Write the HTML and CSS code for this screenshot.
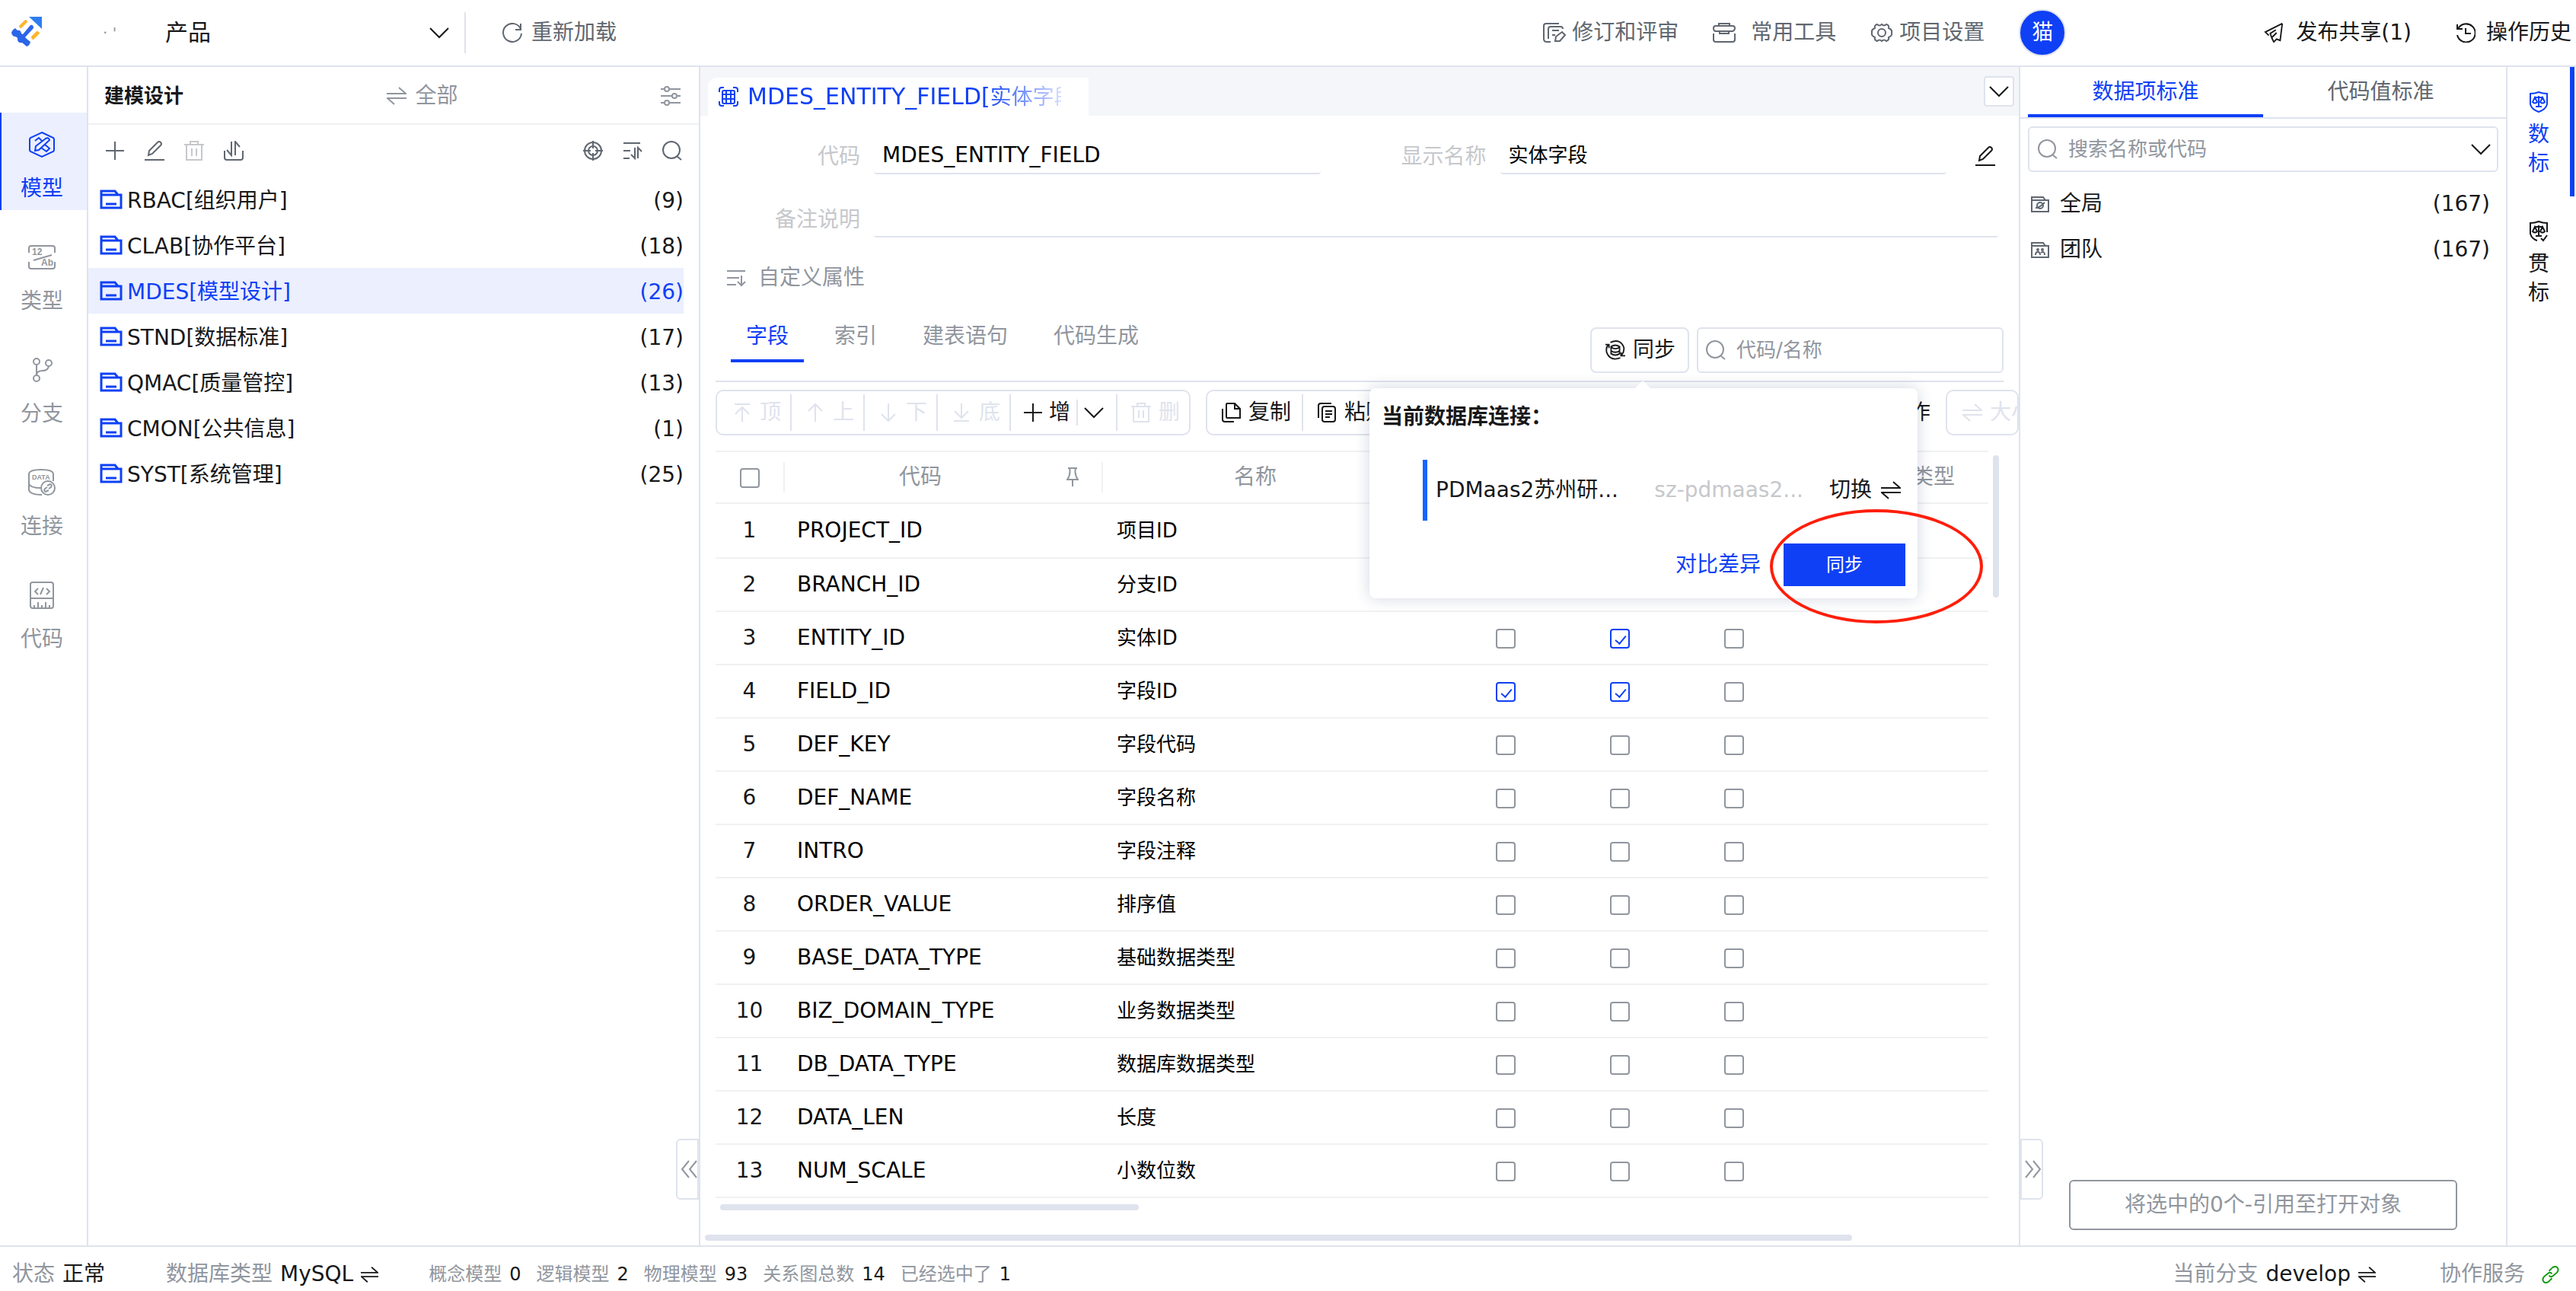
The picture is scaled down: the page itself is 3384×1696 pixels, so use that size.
FILE: index.html
```html
<!DOCTYPE html>
<html lang="zh-CN">
<head>
	<meta charset="UTF-8">
	<title>建模设计</title>
	<link rel="stylesheet" href="styles.css">
</head>
<body>
	<!-- 图标 -->
	<svg class="symbols">
		<symbol id="down" viewBox="0 0 26 26"><path d="M1 7l12 12L25 7"/></symbol>
		<symbol id="reload" viewBox="0 0 26 26"><path d="M24 8A12 12 0 1 0 25 14M24 1v8h-7"/></symbol>
		<symbol id="plus" viewBox="0 0 26 26"><path d="M13 1v24M1 13h24"/></symbol>
		<symbol id="pencil" viewBox="0 0 26 26"><path d="M0 25h26M5 19l1-6L17 2q2-2 4 0t0 4L10 17z"/></symbol>
		<symbol id="trash" viewBox="0 0 26 26"><path d="M0 5h26M8 5V1h10v4M3 5v20h20V5M10 10v10M16 10v10"/></symbol>
		<symbol id="import" viewBox="0 0 26 26"><path d="M1 13v9q0 3 3 3h18q3 0 3-3v-9M10 1v18l-6-7M15 19V1l6 7"/></symbol>
		<symbol id="target" viewBox="0 0 26 26"><circle cx="13" cy="13" r="11"/><circle cx="13" cy="13" r="6"/><path d="M13 0v10M13 16v10M0 13h10M16 13h10"/></symbol>
		<symbol id="sort" viewBox="0 0 26 26"><path d="M1 3h22M1 13h9M1 23h8M16 9v14l-5-5M20 23V9l5 5"/></symbol>
		<symbol id="unfold" viewBox="0 0 26 26"><path d="M1 4h24M1 13h16M1 22h12M20 10v13M15 18l5 5 5-5"/></symbol>
		<symbol id="search" viewBox="0 0 26 26"><circle cx="12" cy="12" r="11"/><path d="M19 20l6 5"/></symbol>
		<symbol id="sliders" viewBox="0 0 26 26"><path d="M0 4h5M11 4h15M0 13h15M21 13h5M0 22h5M11 22h15"/><circle cx="8" cy="4" r="3"/><circle cx="18" cy="13" r="3"/><circle cx="8" cy="22" r="3"/></symbol>
		<symbol id="swap" viewBox="0 0 26 26"><path d="M0 10h25L16 2M26 16H1l9 8"/></symbol>
		<symbol id="folder" viewBox="0 0 30 26"><path d="M2 24V2h18l4 5h4v17zM2 7h24M8 19h14"/></symbol>
		<symbol id="folder-all" viewBox="0 0 24 21"><path d="M1 20V1h15l3 4h4v15zM1 5h18"/><circle cx="12" cy="12" r="4"/><path d="M6 15q4 1 12-7"/></symbol>
		<symbol id="folder-team" viewBox="0 0 24 21"><path d="M1 20V1h15l3 4h4v15zM1 5h18M6 17q0-4 3-4t3 4M13 14q5-3 5 3"/><circle cx="9" cy="10" r="1"/><circle cx="15" cy="10" r="1"/></symbol>
		<symbol id="review" viewBox="0 0 30 26"><path d="M10 25H5q-4 0-4-4V4q0-3 3-3h17M7 21V8q0-3 3-3h13q3 0 3 3M12 10h9M12 16h4"/><path d="M16 24l1-6 8-6 4 4-7 8z"/></symbol>
		<symbol id="toolbox" viewBox="0 0 30 26"><path d="M8 4V1h14v3M1 7q0-3 3-3h22q3 0 3 3t-3 4H4Q1 11 1 7M1 14v8q0 3 3 3h22q3 0 3-3v-8M9 11v3h12v-3"/></symbol>
		<symbol id="gear" viewBox="0 0 28 26"><path d="M8 2q3 3 6 0 3 3 6 0 4 1 3 5 5 2 4 6 1 4-4 6 1 4-3 5-3-3-6 0-3-3-6 0-4-1-3-5-5-2-4-6-1-4 4-6-1-4 3-5z"/><circle cx="14" cy="13" r="5"/></symbol>
		<symbol id="plane" viewBox="0 0 28 28"><path d="M26 1L2 13l5 5M26 1l-3 24-5-2-4 4-3-6M11 21l-2-6 8-5M11 21l7-7"/></symbol>
		<symbol id="history" viewBox="0 0 26 26"><path d="M3 8A12 12 0 1 1 2 16M2 2v6h7M13 7v7h7"/></symbol>
		<symbol id="model" viewBox="0 0 36 36"><path d="M18 2l15 7q1 1 1 2v14q0 1-1 2l-15 7-15-7q-1-1-1-2V11q0-1 1-2z"/><path d="M9 13l5-4 5 5M22 18l6 5-4 4-7-5M23 10q4-2 5 2L14 25l-5 1 1-6z"/></symbol>
		<symbol id="type" viewBox="0 0 36 36"><path d="M1 12V6q0-3 3-3h28q3 0 3 3v6M1 24v6q0 3 3 3h28q3 0 3-3v-6M7 22l24-7"/><text x="5" y="15">12</text><text x="17" y="29">Ab</text></symbol>
		<symbol id="branch" viewBox="0 0 36 36"><circle cx="11" cy="7" r="4"/><circle cx="27" cy="9" r="4"/><circle cx="11" cy="29" r="4"/><path d="M11 11v14M27 13q-1 6-8 6-8 0-8 6"/></symbol>
		<symbol id="link-db" viewBox="0 0 36 36"><path d="M1 7q0-6 16-6t16 6v9M1 7v21q2 6 17 6M1 20q3 5 15 5"/><text class="small" x="5" y="14">DATA</text><circle cx="26" cy="25" r="9"/><path d="M25 22l4-2q3 1 1 4l-3 2M27 28l-4 2q-3-1-1-4l3-2"/></symbol>
		<symbol id="code" viewBox="0 0 36 36"><rect x="3" y="1" width="30" height="34" rx="3"/><path d="M3 22h30M13 9l-4 4 4 4M24 9l4 4-4 4M20 8l-4 9M8 31v4M13 27v8M18 31v4M23 27v8M28 31v4"/></symbol>
		<symbol id="table" viewBox="0 0 26 26"><path d="M1 7V4q0-3 3-3h3M19 1h3q3 0 3 3v3M1 19v3q0 3 3 3h3M19 25h3q3 0 3-3v-3"/><rect x="5" y="5" width="16" height="17" rx="2"/><path d="M5 10h16M5 16h16M10 5v17M16 5v17"/></symbol>
		<symbol id="db-sync" viewBox="0 0 30 28"><path d="M8 3q14-6 19 7 1 6-3 11M22 25Q8 30 3 18 1 11 5 6M1 6h5v5M29 22h-6v-5"/><path d="M9 9q6-4 12 0v10q-6 4-12 0zM9 10q6 4 12 0M9 15q6 4 12 0"/></symbol>
		<symbol id="top" viewBox="0 0 26 26"><path d="M3 2h20M13 25V7M4 15l9-9 9 9"/></symbol>
		<symbol id="up" viewBox="0 0 26 26"><path d="M13 25V2M4 11l9-9 9 9"/></symbol>
		<symbol id="dn" viewBox="0 0 26 26"><path d="M13 1v23M4 15l9 9 9-9"/></symbol>
		<symbol id="bottom" viewBox="0 0 26 26"><path d="M3 24h20M13 1v18M4 11l9 9 9-9"/></symbol>
		<symbol id="copy" viewBox="0 0 26 26"><path d="M8 1h10l7 7v12H8q-1 0-1-2V3q0-2 1-2M18 1v7h7M2 8v14q0 3 3 3h12"/></symbol>
		<symbol id="paste" viewBox="0 0 26 26"><path d="M2 20V4q0-3 3-3h14"/><rect x="7" y="5" width="17" height="20" rx="3"/><path d="M11 11h9M11 15h9M11 19h6"/></symbol>
		<symbol id="pin" viewBox="0 0 16 26"><path d="M2 1h12M4 1q2 8-3 15h14Q10 9 12 1M8 16v9"/></symbol>
		<symbol id="left2" viewBox="0 0 22 24"><path d="M11 1L2 12l9 11M21 1l-9 11 9 11"/></symbol>
		<symbol id="right2" viewBox="0 0 22 24"><path d="M1 1l9 11-9 11M11 1l9 11-9 11"/></symbol>
		<symbol id="scale" viewBox="0 0 26 28"><path d="M13 1q5 2 11 2v14q-2 7-11 10Q4 24 2 17V3q6 0 11-2zM7 8h12M13 6v14M9 20h8M8 8l-3 6q3 3 6 0zM18 8l-3 6q3 3 6 0z"/></symbol>
		<symbol id="scale-check" viewBox="0 0 26 28"><path d="M24 15V3q-6 0-11-2-5 2-11 2v14q2 7 9 9M16 23l3 3 5-7M7 8h12M13 6v14M9 20h8M8 8l-3 6q3 3 6 0zM18 8l-3 6q3 3 6 0z"/></symbol>
		<symbol id="chain" viewBox="0 0 24 24"><path d="M10 7l5-5q4-2 6 0 3 3 0 7l-6 5q-3 2-5-1M14 17l-5 5q-4 2-6 0-3-3 0-7l6-5q3-2 5 1"/></symbol>
	</svg>

	<header class="header">
		<svg class="logo" viewBox="0 0 42 42">
			<path class="logo-corner" d="M25 0h17v16z"/>
			<path class="logo-orange" d="M12 12l8-8q3 0 3 3l-8 8q-3 0-3-3zM28 26l7-7q4 0 4 3l-8 8q-3 0-3-4z"/>
			<path class="logo-blue" d="M27 11q4-1 4 4L20 27l2 2 5 4q-1 5-5 6l-6-5q-4 1-6-3 1-4-3-5-4 0-5-5 1-4 5-6l3 3q4-1 5 4l2 1z"/>
		</svg>
		<button class="product"><span class="product-dots">· '</span><span class="product-name">产品</span><svg class="icon"><use href="#down"/></svg></button>
		<button class="head-btn reload"><svg class="icon"><use href="#reload"/></svg>重新加载</button>
		<nav class="head-nav">
			<button class="head-btn"><svg class="icon wide"><use href="#review"/></svg>修订和评审</button>
			<button class="head-btn tools-btn"><svg class="icon wide"><use href="#toolbox"/></svg>常用工具</button>
			<button class="head-btn"><svg class="icon wide"><use href="#gear"/></svg>项目设置</button>
			<span class="avatar">猫</span>
		</nav>
		<nav class="head-right">
			<button class="head-btn"><svg class="icon wide"><use href="#plane"/></svg>发布共享(1)</button>
			<button class="head-btn"><svg class="icon"><use href="#history"/></svg>操作历史</button>
		</nav>
	</header>

	<main class="main">
		<nav class="rail">
			<button class="rail-item active"><svg><use href="#model"/></svg>模型</button>
			<button class="rail-item"><svg><use href="#type"/></svg>类型</button>
			<button class="rail-item"><svg><use href="#branch"/></svg>分支</button>
			<button class="rail-item"><svg><use href="#link-db"/></svg>连接</button>
			<button class="rail-item"><svg><use href="#code"/></svg>代码</button>
		</nav>

		<aside class="side">
			<div class="side-head">
				<h2>建模设计</h2>
				<button class="all"><svg class="icon"><use href="#swap"/></svg>全部</button>
				<button class="filter" aria-label="筛选"><svg class="icon"><use href="#sliders"/></svg></button>
			</div>
			<div class="side-tools">
				<button aria-label="新增"><svg class="icon"><use href="#plus"/></svg></button>
				<button aria-label="编辑"><svg class="icon"><use href="#pencil"/></svg></button>
				<button aria-label="删除" disabled><svg class="icon"><use href="#trash"/></svg></button>
				<button aria-label="导入"><svg class="icon"><use href="#import"/></svg></button>
				<button class="push" aria-label="定位"><svg class="icon"><use href="#target"/></svg></button>
				<button aria-label="排序"><svg class="icon"><use href="#sort"/></svg></button>
				<button aria-label="搜索"><svg class="icon"><use href="#search"/></svg></button>
			</div>
			<ul class="tree">
				<li><svg><use href="#folder"/></svg><span>RBAC[组织用户]</span><em>(9)</em></li>
				<li><svg><use href="#folder"/></svg><span>CLAB[协作平台]</span><em>(18)</em></li>
				<li class="active"><svg><use href="#folder"/></svg><span>MDES[模型设计]</span><em>(26)</em></li>
				<li><svg><use href="#folder"/></svg><span>STND[数据标准]</span><em>(17)</em></li>
				<li><svg><use href="#folder"/></svg><span>QMAC[质量管控]</span><em>(13)</em></li>
				<li><svg><use href="#folder"/></svg><span>CMON[公共信息]</span><em>(1)</em></li>
				<li><svg><use href="#folder"/></svg><span>SYST[系统管理]</span><em>(25)</em></li>
			</ul>
			<button class="fold fold-left" aria-label="收起左侧"><svg><use href="#left2"/></svg></button>
		</aside>

		<section class="center">
			<div class="file-tabs">
				<button class="file-tab"><svg class="icon"><use href="#table"/></svg><span class="file-name"><span class="file-code">MDES_ENTITY_FIELD[</span>实体字段]</span></button>
				<button class="more" aria-label="更多"><svg class="icon"><use href="#down"/></svg></button>
			</div>

			<form class="form">
				<div class="form-row">
					<label for="code-input">代码</label>
					<input id="code-input" value="MDES_ENTITY_FIELD">
					<label for="name-input" class="name-label">显示名称</label>
					<input id="name-input" class="name" value="实体字段">
					<button type="button" aria-label="编辑"><svg class="icon"><use href="#pencil"/></svg></button>
				</div>
				<div class="form-row">
					<label for="intro-input">备注说明</label>
					<input id="intro-input">
				</div>
				<button type="button" class="custom"><svg class="icon"><use href="#unfold"/></svg>自定义属性</button>
			</form>

			<div class="tabbar">
				<button class="tab active">字段</button>
				<button class="tab">索引</button>
				<button class="tab">建表语句</button>
				<button class="tab">代码生成</button>
				<div class="tab-tools">
					<div class="sync">
						<button class="sync-btn"><svg class="icon wide"><use href="#db-sync"/></svg>同步</button>
						<div class="popover">
							<h3>当前数据库连接：</h3>
							<div class="conn">
								<span class="conn-name">PDMaas2苏州研...</span>
								<span class="conn-host">sz-pdmaas2...</span>
								<button>切换<svg class="icon"><use href="#swap"/></svg></button>
							</div>
							<div class="pop-foot">
								<a href="#">对比差异</a>
								<button class="primary">同步</button>
							</div>
							<div class="mark"></div>
						</div>
					</div>
					<label class="search-box"><svg class="icon"><use href="#search"/></svg><input placeholder="代码/名称" aria-label="代码/名称"></label>
				</div>
			</div>

			<div class="toolbar">
				<div class="group">
					<button disabled><svg class="icon"><use href="#top"/></svg>顶</button>
					<button disabled><svg class="icon"><use href="#up"/></svg>上</button>
					<button disabled><svg class="icon"><use href="#dn"/></svg>下</button>
					<button disabled><svg class="icon"><use href="#bottom"/></svg>底</button>
					<button class="add"><svg class="icon"><use href="#plus"/></svg>增<i></i><svg class="icon"><use href="#down"/></svg></button>
					<button disabled><svg class="icon"><use href="#trash"/></svg>删</button>
				</div>
				<div class="group second">
					<button><svg class="icon"><use href="#copy"/></svg>复制</button>
					<button><svg class="icon"><use href="#paste"/></svg>粘贴</button>
				</div>
				<button class="actions">操作</button>
				<div class="cut">
					<div class="group">
						<button disabled><svg class="icon"><use href="#swap"/></svg>大小写</button>
					</div>
				</div>
			</div>

			<div class="grid">
				<table class="fields">
					<colgroup><col class="c-no"><col class="c-code"><col class="c-name"><col class="c-box"><col class="c-box"><col class="c-box"><col></colgroup>
					<thead>
						<tr><th><input type="checkbox" aria-label="全选"></th><th class="pinned"><div>代码<svg><use href="#pin"/></svg></div></th><th class="th-name">名称</th><th aria-label="主键"></th><th aria-label="不为空"></th><th aria-label="自增"></th><th class="th-type">类型</th></tr>
					</thead>
					<tbody>
						<tr><td>1</td><td>PROJECT_ID</td><td>项目ID</td><td><input type="checkbox" aria-label="主键"></td><td><input type="checkbox" aria-label="不为空"></td><td><input type="checkbox" aria-label="自增"></td><td></td></tr>
						<tr><td>2</td><td>BRANCH_ID</td><td>分支ID</td><td><input type="checkbox" aria-label="主键"></td><td><input type="checkbox" aria-label="不为空"></td><td><input type="checkbox" aria-label="自增"></td><td></td></tr>
						<tr><td>3</td><td>ENTITY_ID</td><td>实体ID</td><td><input type="checkbox" aria-label="主键"></td><td><input type="checkbox" aria-label="不为空" checked></td><td><input type="checkbox" aria-label="自增"></td><td></td></tr>
						<tr><td>4</td><td>FIELD_ID</td><td>字段ID</td><td><input type="checkbox" aria-label="主键" checked></td><td><input type="checkbox" aria-label="不为空" checked></td><td><input type="checkbox" aria-label="自增"></td><td></td></tr>
						<tr><td>5</td><td>DEF_KEY</td><td>字段代码</td><td><input type="checkbox" aria-label="主键"></td><td><input type="checkbox" aria-label="不为空"></td><td><input type="checkbox" aria-label="自增"></td><td></td></tr>
						<tr><td>6</td><td>DEF_NAME</td><td>字段名称</td><td><input type="checkbox" aria-label="主键"></td><td><input type="checkbox" aria-label="不为空"></td><td><input type="checkbox" aria-label="自增"></td><td></td></tr>
						<tr><td>7</td><td>INTRO</td><td>字段注释</td><td><input type="checkbox" aria-label="主键"></td><td><input type="checkbox" aria-label="不为空"></td><td><input type="checkbox" aria-label="自增"></td><td></td></tr>
						<tr><td>8</td><td>ORDER_VALUE</td><td>排序值</td><td><input type="checkbox" aria-label="主键"></td><td><input type="checkbox" aria-label="不为空"></td><td><input type="checkbox" aria-label="自增"></td><td></td></tr>
						<tr><td>9</td><td>BASE_DATA_TYPE</td><td>基础数据类型</td><td><input type="checkbox" aria-label="主键"></td><td><input type="checkbox" aria-label="不为空"></td><td><input type="checkbox" aria-label="自增"></td><td></td></tr>
						<tr><td>10</td><td>BIZ_DOMAIN_TYPE</td><td>业务数据类型</td><td><input type="checkbox" aria-label="主键"></td><td><input type="checkbox" aria-label="不为空"></td><td><input type="checkbox" aria-label="自增"></td><td></td></tr>
						<tr><td>11</td><td>DB_DATA_TYPE</td><td>数据库数据类型</td><td><input type="checkbox" aria-label="主键"></td><td><input type="checkbox" aria-label="不为空"></td><td><input type="checkbox" aria-label="自增"></td><td></td></tr>
						<tr><td>12</td><td>DATA_LEN</td><td>长度</td><td><input type="checkbox" aria-label="主键"></td><td><input type="checkbox" aria-label="不为空"></td><td><input type="checkbox" aria-label="自增"></td><td></td></tr>
						<tr><td>13</td><td>NUM_SCALE</td><td>小数位数</td><td><input type="checkbox" aria-label="主键"></td><td><input type="checkbox" aria-label="不为空"></td><td><input type="checkbox" aria-label="自增"></td><td></td></tr>
					</tbody>
				</table>
				<div class="bar-v"></div>
			</div>
			<div class="bar-h"></div>
			<div class="bar-h outer"></div>
		</section>

		<aside class="standard">
			<div class="std-tabs">
				<button class="active">数据项标准</button>
				<button>代码值标准</button>
			</div>
			<label class="search-box"><svg class="icon"><use href="#search"/></svg><input placeholder="搜索名称或代码" aria-label="搜索名称或代码"><svg class="icon arrow"><use href="#down"/></svg></label>
			<ul class="std-list">
				<li><svg><use href="#folder-all"/></svg><span>全局</span><em>(167)</em></li>
				<li><svg><use href="#folder-team"/></svg><span>团队</span><em>(167)</em></li>
			</ul>
			<button class="quote">将选中的0个-引用至打开对象</button>
			<button class="fold fold-right" aria-label="收起右侧"><svg><use href="#right2"/></svg></button>
		</aside>

		<nav class="rail-right">
			<button class="active"><svg><use href="#scale"/></svg><span>数标</span></button>
			<button><svg><use href="#scale-check"/></svg><span>贯标</span></button>
		</nav>
	</main>

	<footer class="footer">
		<span class="stat">状态 <b>正常</b></span>
		<span class="stat db">数据库类型 <b>MySQL</b><svg class="icon"><use href="#swap"/></svg></span>
		<div class="counts">
			<span>概念模型<b>0</b></span>
			<span>逻辑模型<b>2</b></span>
			<span>物理模型<b>93</b></span>
			<span>关系图总数<b>14</b></span>
			<span>已经选中了<b>1</b></span>
		</div>
		<span class="stat branch">当前分支 <b>develop</b><svg class="icon"><use href="#swap"/></svg></span>
		<span class="stat service">协作服务<svg class="icon"><use href="#chain"/></svg></span>
	</footer>
</body>
</html>
```
FILE: styles.css
```css
* {
	padding: 0;
	margin: 0;
	box-sizing: border-box;
}
body {
	display: flex;
	flex-direction: column;
	height: 100vh;
	overflow: hidden;
	font-family: "DejaVu Sans", "Noto Sans CJK SC", sans-serif;
	font-size: 28px;
	line-height: 40px;
	color: #17181a;
	background-color: #fff;
}
button, input {
	font: inherit;
	color: inherit;
	border: none;
	background: none;
	outline: none;
}
button {
	display: flex;
	align-items: center;
	white-space: nowrap;
	cursor: pointer;
}
input {
	min-width: 0;
}
input::placeholder {
	color: #91969e;
	opacity: 1;
}
ul {
	list-style: none;
}
em {
	font-style: normal;
}
b {
	font-weight: normal;
	color: #17181a;
}
a {
	color: #0f40f5;
	text-decoration: none;
}
svg {
	flex: none;
	fill: none;
	stroke: currentColor;
	stroke-width: 2;
}
svg text {
	font: bold 12px "Liberation Sans", sans-serif;
	fill: currentColor;
	stroke: none;
}
svg .small {
	font-size: 9px;
}
.symbols {
	display: none;
}
.icon {
	width: 26px;
	height: 26px;
}
.icon.wide {
	width: 30px;
}

/* header */
.header {
	display: flex;
	align-items: center;
	height: 88px;
	padding: 0 6px 0 13px;
	border-bottom: 2px solid #dfe3ed;
}
.logo {
	width: 42px;
	height: 42px;
	stroke: none;
}
.logo-corner {
	fill: #2e7df0;
}
.logo-orange {
	fill: #fbb62c;
}
.logo-blue {
	fill: #2c66e8;
}
.product {
	width: 557px;
	height: 54px;
	padding: 0 20px 0 80px;
	font-size: 30px;
	border-right: 2px solid #dfe3ed;
}
.product-dots {
	width: 82px;
	font-size: 20px;
	text-align: left;
	color: #91969e;
}
.product .icon {
	margin-left: auto;
}
.head-btn {
	gap: 12px;
	color: #606770;
}
.reload {
	margin-left: 48px;
}
.head-nav {
	display: flex;
	align-items: center;
	gap: 45px;
	margin-left: auto;
	margin-right: 258px;
}
.head-nav .head-btn {
	gap: 8px;
}
.head-nav .tools-btn {
	gap: 20px;
}
.avatar {
	width: 62px;
	height: 62px;
	line-height: 58px;
	text-align: center;
	color: #fff;
	border: 2px solid #dfe3ed;
	border-radius: 50%;
	background-color: #0f40f5;
}
.head-right {
	display: flex;
	gap: 58px;
}
.head-right .head-btn {
	gap: 14px;
	color: #17181a;
}

.main {
	display: flex;
	flex: 1;
	min-height: 0;
}

/* left rail */
.rail {
	display: flex;
	flex: none;
	flex-direction: column;
	gap: 20px;
	width: 116px;
	padding-top: 60px;
	border-right: 2px solid #dfe3ed;
}
.rail-item {
	flex-direction: column;
	gap: 20px;
	height: 128px;
	padding-top: 24px;
	padding-right: 6px;
	color: #91969e;
	border-left: 2px solid transparent;
}
.rail-item svg {
	width: 36px;
	height: 36px;
}
.rail-item.active {
	color: #0f40f5;
	border-color: #0f40f5;
	background-color: #ebeffe;
}

/* model tree */
.side {
	position: relative;
	flex: none;
	width: 804px;
	border-right: 2px solid #dfe3ed;
}
.side-head {
	display: flex;
	align-items: center;
	justify-content: space-between;
	height: 76px;
	padding: 2px 24px 0 21px;
	color: #91969e;
	border-bottom: 2px solid #f0f1f3;
}
.side-head h2 {
	font-size: 26px;
	color: #17181a;
}
.all {
	gap: 12px;
}
.side-tools {
	display: flex;
	align-items: center;
	gap: 26px;
	height: 68px;
	padding: 0 22px;
	color: #606770;
}
.side-tools button:disabled {
	color: #c6c8cc;
}
.push {
	margin-left: auto;
}
.tree {
	padding-right: 20px;
}
.tree li {
	display: flex;
	align-items: center;
	gap: 6px;
	height: 60px;
	padding-left: 15px;
}
.tree svg {
	width: 30px;
	height: 26px;
	color: #0f40f5;
	stroke-width: 3;
}
.tree span, .tree em {
	padding-top: 4px;
}
.tree em {
	margin-left: auto;
}
.tree .active {
	color: #0f40f5;
	background-color: #ebeffe;
}
.fold {
	position: absolute;
	bottom: 60px;
	justify-content: center;
	width: 30px;
	height: 80px;
	padding-left: 4px;
	color: #91969e;
	border: 2px solid #dfe3ed;
	background-color: #fff;
}
.fold svg {
	width: 22px;
	height: 24px;
}
.fold-left {
	right: 0;
	border-radius: 6px 0 0 6px;
}
.fold-right {
	left: 0;
	border-radius: 0 6px 6px 0;
}

/* editor */
.center {
	display: flex;
	flex: 1;
	flex-direction: column;
	min-width: 0;
	padding-bottom: 6px;
}
.file-tabs {
	display: flex;
	justify-content: space-between;
	padding: 12px 6px 0 10px;
	background-color: #f5f6f9;
}
.file-tab {
	gap: 12px;
	width: 500px;
	height: 50px;
	margin-top: 2px;
	padding: 0 36px 0 14px;
	color: #0f40f5;
	border-radius: 12px 0 0 0;
	background-color: #fff;
}
.file-name {
	flex: 1;
	overflow: hidden;
	text-align: left;
	-webkit-mask-image: linear-gradient(to right, #000 75%, transparent 105%);
	mask-image: linear-gradient(to right, #000 75%, transparent 105%);
}
.file-code {
	font-size: 30px;
}
.more {
	justify-content: center;
	width: 40px;
	height: 40px;
	border: 2px solid #dfe3ed;
	border-radius: 4px;
	background-color: #fff;
}
.form {
	padding-top: 29px;
}
.form-row {
	display: flex;
	gap: 18px;
	height: 48px;
	margin-bottom: 35px;
	padding-right: 27px;
	line-height: 50px;
}
.form-row label {
	width: 210px;
	text-align: right;
	color: #c6c8cc;
}
.form-row .name-label {
	width: 200px;
}
.form-row input {
	flex: 1;
	padding: 0 11px;
	color: #000;
	border-bottom: 2px solid #dfe3ed;
	border-radius: 4px;
}
.form-row input.name {
	font-size: 26px;
}
.form-row button {
	padding: 0 4px 0 20px;
}
.custom {
	gap: 16px;
	margin-left: 34px;
	line-height: 36px;
	color: #91969e;
}
.tabbar {
	display: flex;
	gap: 20px;
	height: 82px;
	margin: 37px 20px 0;
	padding-left: 20px;
	border-bottom: 2px solid #dfe3ed;
}
.tab {
	height: 56px;
	padding: 0 20px 8px;
	color: #91969e;
	border-bottom: 4px solid transparent;
}
.tab.active {
	color: #0f40f5;
	border-color: #0f40f5;
}
.tab-tools {
	display: flex;
	gap: 10px;
	height: 60px;
	margin: 10px 0 0 auto;
}
.sync {
	position: relative;
}
.sync-btn {
	gap: 8px;
	height: 60px;
	padding: 0 16px;
	border: 2px solid #dfe3ed;
	border-radius: 8px;
}
.search-box {
	display: flex;
	align-items: center;
	gap: 14px;
	width: 403px;
	height: 60px;
	padding: 0 10px;
	font-size: 26px;
	color: #91969e;
	border: 2px solid #dfe3ed;
	border-radius: 6px;
}
.search-box input {
	flex: 1;
}
.toolbar {
	display: flex;
	gap: 20px;
	margin: 10px 0 20px 20px;
}
.group {
	display: flex;
	flex: none;
	align-items: center;
	height: 60px;
	border: 2px solid #dfe3ed;
	border-radius: 10px;
}
.group button {
	gap: 10px;
	height: 48px;
	padding: 0 12px 0 18px;
	border-left: 2px solid #dfe3ed;
}
.group button:first-child {
	padding-left: 20px;
	border-left: none;
}
.group button:disabled {
	color: #dfe3ed;
}
.group .add {
	gap: 8px;
	padding: 0 16px;
}
.add i {
	width: 2px;
	height: 34px;
	background-color: #dfe3ed;
}
.group.second button {
	padding: 0 14px 0 18px;
}
.actions {
	flex: 1;
	justify-content: flex-end;
}
.cut {
	width: 96px;
	overflow: hidden;
}

/* field table */
.grid {
	display: flex;
	gap: 6px;
	margin: 0 26px 0 20px;
}
.fields {
	flex: 1;
	table-layout: fixed;
	border-spacing: 0;
}
.c-no {
	width: 89px;
}
.c-code {
	width: 420px;
}
.c-name {
	width: 454px;
}
.c-box {
	width: 150px;
}
.fields th {
	height: 70px;
	font-weight: normal;
	color: #91969e;
	border-top: 2px solid #f0f1f3;
	border-bottom: 2px solid #f0f1f3;
}
.fields .th-name {
	padding-right: 54px;
}
.fields .th-type {
	padding-right: 44px;
	text-align: right;
}
.pinned div {
	display: flex;
	align-items: center;
	justify-content: center;
	padding-left: 150px;
	border-left: 2px solid #f0f1f3;
	border-right: 2px solid #f0f1f3;
}
.pinned svg {
	width: 16px;
	height: 26px;
	margin: 0 30px 0 164px;
}
.fields td {
	height: 70px;
	padding-left: 18px;
	color: #000;
	border-bottom: 2px solid #f0f1f3;
}
.fields tr:first-child td {
	height: 72px;
}
.fields td:first-child {
	padding-left: 0;
	text-align: center;
	color: #17181a;
}
.fields td:nth-child(3) {
	font-size: 26px;
}
.fields td:nth-child(n+4) {
	padding-left: 0;
	text-align: center;
}
.fields input {
	position: relative;
	width: 26px;
	height: 26px;
	vertical-align: middle;
	border: 2px solid #91969e;
	border-radius: 4px;
	background-color: #fff;
	appearance: none;
}
.fields input:checked {
	border-color: #0f40f5;
}
.fields input:checked::after {
	content: "";
	position: absolute;
	top: 4px;
	left: 8px;
	width: 6px;
	height: 12px;
	border: solid #0f40f5;
	border-width: 0 2px 2px 0;
	transform: rotate(40deg);
}
.bar-v {
	width: 8px;
	height: 187px;
	margin-top: 6px;
	border-radius: 4px;
	background-color: #dfe3ed;
}
.bar-h {
	width: 550px;
	height: 8px;
	margin: 8px 0 0 26px;
	border-radius: 4px;
	background-color: #dfe3ed;
}
.bar-h.outer {
	width: 87%;
	margin: auto 0 0 6px;
}

/* sync popover */
.popover {
	position: absolute;
	z-index: 2;
	top: 80px;
	right: -300px;
	width: 720px;
	height: 276px;
	padding: 18px 16px;
	border-radius: 8px;
	background-color: #fff;
	box-shadow: 0 0 20px rgba(30, 50, 100, .2);
}
.popover::before {
	content: "";
	position: absolute;
	top: -10px;
	left: 349px;
	border: 10px solid transparent;
	border-top: none;
	border-bottom-color: #fff;
}
.popover h3 {
	font-size: 28px;
}
.conn {
	display: flex;
	align-items: center;
	height: 80px;
	margin: 36px 6px 30px 54px;
	padding-left: 11px;
	border-left: 6px solid #1664ff;
}
.conn-name {
	flex: 1;
}
.conn-host {
	margin-right: 34px;
	color: #c6c8cc;
}
.conn button {
	gap: 12px;
}
.pop-foot {
	display: flex;
	align-items: center;
	justify-content: flex-end;
	gap: 30px;
}
.primary {
	justify-content: center;
	width: 160px;
	height: 56px;
	font-size: 24px;
	color: #fff;
	background-color: #0f40f5;
}
.mark {
	position: absolute;
	top: 159px;
	left: 526px;
	width: 280px;
	height: 150px;
	border: 4px solid #ff1e0a;
	border-radius: 50%;
	pointer-events: none;
}

/* standards */
.standard {
	position: relative;
	display: flex;
	flex: none;
	flex-direction: column;
	width: 642px;
	border-left: 2px solid #dfe3ed;
	border-right: 2px solid #dfe3ed;
}
.std-tabs {
	display: flex;
	height: 68px;
	padding: 0 10px;
	border-bottom: 2px solid #dfe3ed;
}
.std-tabs button {
	flex: 1;
	justify-content: center;
	padding-top: 4px;
	color: #606770;
	border-bottom: 4px solid transparent;
}
.std-tabs .active {
	color: #0f40f5;
	border-color: #0f40f5;
}
.standard .search-box {
	width: auto;
	margin: 10px 10px 12px;
	padding: 0 8px 0 11px;
}
.arrow {
	color: #17181a;
}
.std-list li {
	display: flex;
	align-items: center;
	gap: 14px;
	height: 60px;
	padding: 0 21px 0 14px;
}
.std-list svg {
	width: 24px;
	height: 21px;
	color: #606770;
}
.std-list em {
	margin-left: auto;
}
.quote {
	justify-content: center;
	width: 510px;
	height: 66px;
	margin: auto auto 20px;
	color: #91969e;
	border: 2px solid #91969e;
	border-radius: 6px;
}
.rail-right {
	flex: none;
	width: 90px;
	padding-right: 2px;
}
.rail-right button {
	flex-direction: column;
	gap: 10px;
	width: 100%;
	height: 170px;
	padding: 32px 0 0;
	line-height: 38px;
	border-right: 6px solid transparent;
}
.rail-right svg {
	width: 26px;
	height: 28px;
}
.rail-right span {
	width: 28px;
	white-space: normal;
}
.rail-right .active {
	color: #0f40f5;
	border-color: #0f40f5;
}

/* footer */
.footer {
	display: flex;
	align-items: center;
	height: 60px;
	padding: 14px 22px 0 16px;
	color: #91969e;
	border-top: 2px solid #dfe3ed;
}
.stat {
	display: flex;
	align-items: center;
	gap: 10px;
}
.stat .icon {
	width: 23px;
	height: 23px;
	color: #17181a;
}
.db {
	margin: 0 66px 0 80px;
}
.counts {
	display: flex;
	gap: 20px;
	font-size: 24px;
}
.counts b {
	margin-left: 10px;
}
.branch {
	margin-left: auto;
	margin-right: 84px;
}
.service {
	gap: 22px;
}
.stat.service .icon {
	color: #0a9b0a;
}
```
